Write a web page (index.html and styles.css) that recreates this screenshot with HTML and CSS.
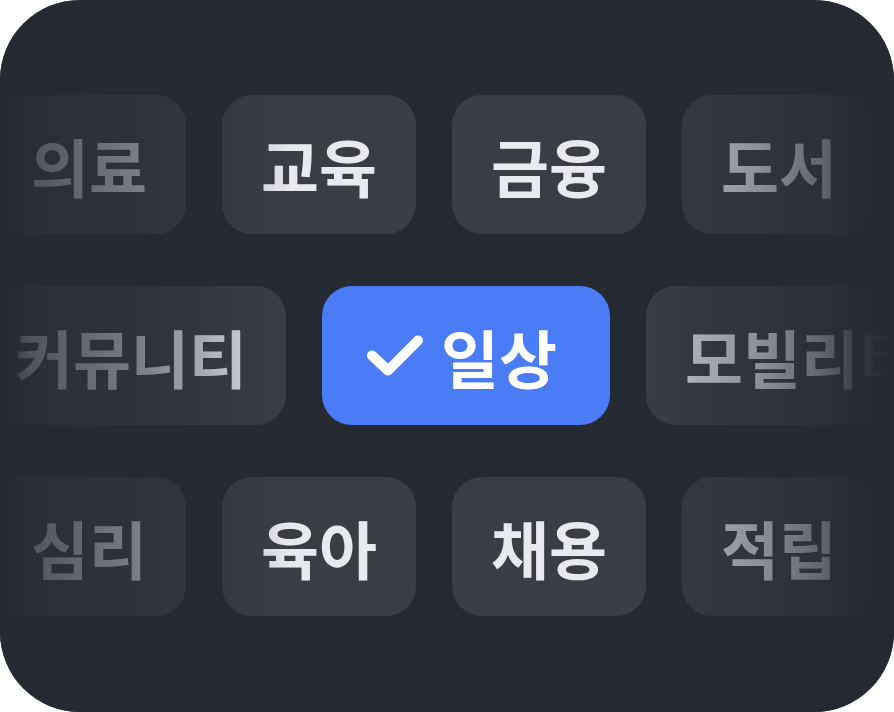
FILE: index.html
```html
<!DOCTYPE html>
<html lang="ko">
<head>
<meta charset="utf-8">
<link rel="stylesheet" href="styles.css">
</head>
<body>
<div class="card">
  <div class="rows">
    <div class="row row-a">
      <div class="chip">의료</div>
      <div class="chip">교육</div>
      <div class="chip">금융</div>
      <div class="chip">도서</div>
    </div>
    <div class="row row-b">
      <div class="chip chip-wide">커뮤니티</div>
      <div class="chip chip-selected">
        <svg class="check" width="64" height="64" viewBox="0 0 64 64" aria-hidden="true">
          <path d="M11 31.5 L27 46.5 L57 16.5" fill="none" stroke="#ffffff" stroke-width="10" stroke-linecap="round" stroke-linejoin="round"/>
        </svg>
        <span>일상</span>
      </div>
      <div class="chip chip-wide">모빌리티</div>
    </div>
    <div class="row row-a">
      <div class="chip">심리</div>
      <div class="chip">육아</div>
      <div class="chip">채용</div>
      <div class="chip">적립</div>
    </div>
  </div>
  <div class="fade fade-left"></div>
  <div class="fade fade-right"></div>
</div>
</body>
</html>
```

FILE: styles.css
```css
html, body {
  margin: 0;
  padding: 0;
  background: #ffffff;
}

.card {
  position: relative;
  width: 894px;
  height: 712px;
  border-radius: 80px;
  background: #252932;
  overflow: hidden;
  font-family: "Noto Sans CJK KR", "Noto Sans", sans-serif;
}

.rows {
  display: flex;
  flex-direction: column;
  gap: 52px;
  padding-top: 95px;
}

.row {
  display: flex;
  gap: 36px;
  white-space: nowrap;
}

.row-a {
  margin-left: -8px;
}

.row-b {
  margin-left: -24px;
}

.chip {
  flex: none;
  box-sizing: border-box;
  display: flex;
  align-items: center;
  justify-content: center;
  width: 194px;
  height: 139px;
  border-radius: 30px;
  background: #3b3d44;
  color: #e9eaee;
  font-size: 63px;
  font-weight: 700;
  line-height: 1;
}

.chip-wide {
  width: 310px;
}

.chip-selected {
  width: 288px;
  justify-content: flex-start;
  padding-left: 39px;
  gap: 16px;
  background: #4a7cf8;
  color: #ffffff;
}

.check {
  display: block;
  flex: none;
}

.fade {
  position: absolute;
  top: 0;
  bottom: 0;
  pointer-events: none;
}

.fade-left {
  left: 0;
  width: 290px;
  background: linear-gradient(90deg,
    rgba(37, 41, 50, 1) 0px,
    rgba(37, 41, 50, 0.78) 30px,
    rgba(37, 41, 50, 0.55) 145px,
    rgba(37, 41, 50, 0.18) 240px,
    rgba(37, 41, 50, 0) 290px);
}

.fade-right {
  right: 0;
  width: 254px;
  background: linear-gradient(90deg,
    rgba(37, 41, 50, 0) 0px,
    rgba(37, 41, 50, 0.3) 50px,
    rgba(37, 41, 50, 0.47) 120px,
    rgba(37, 41, 50, 0.7) 185px,
    rgba(37, 41, 50, 0.95) 225px,
    rgba(37, 41, 50, 1) 254px);
}
```
